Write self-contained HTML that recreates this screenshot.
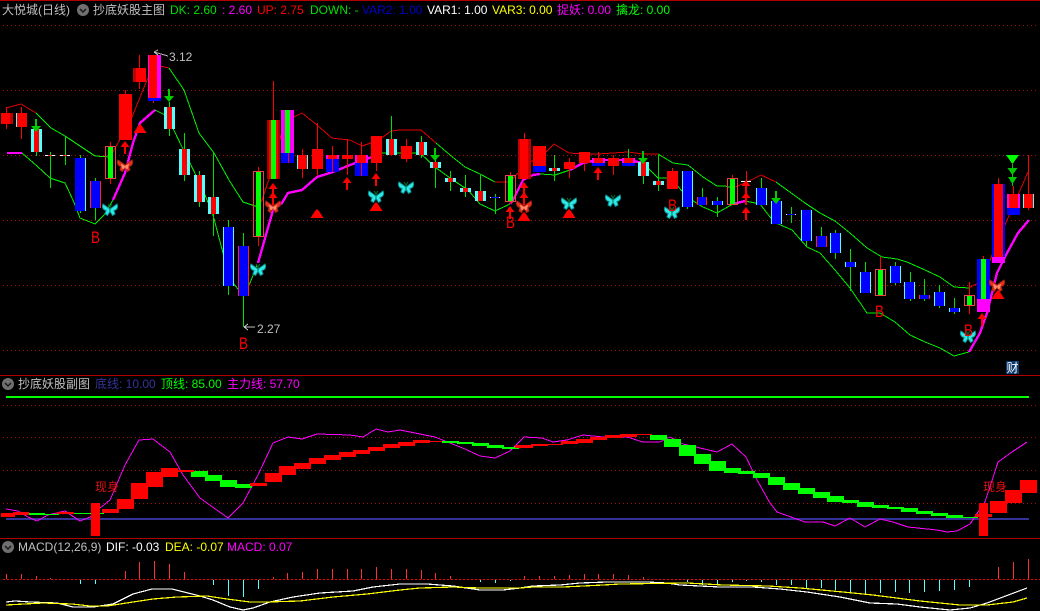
<!DOCTYPE html>
<html lang="zh"><head><meta charset="utf-8"><title>K线</title>
<style>
html,body{margin:0;padding:0;background:#000;width:1040px;height:611px;overflow:hidden}
svg{display:block}
text{font-family:"Liberation Sans","WenQuanYi Zen Hei","Noto Sans CJK SC",sans-serif;font-size:12px}
.l{fill:none;shape-rendering:crispEdges}
.p{shape-rendering:crispEdges}
</style></head><body>
<svg xmlns="http://www.w3.org/2000/svg" width="1040" height="611" viewBox="0 0 1040 611">
<defs>
<g id="bf"><path d="M0 -1 L-7 -6 C-8.500 -3 -7 0 -4 0.500 L-5 4 L-2.500 5.500 L0 1.500 L2.500 5.500 L5 4 L4 0.500 C7 0 8.500 -3 7 -6Z" stroke-width="1"/><path d="M0 1V-3M0 -3L-2 -6M0 -3L2 -6" stroke="#073" fill="none"/></g>
<g id="bo"><path d="M0 -1 L-7 -6 C-8.500 -3 -7 0 -4 0.500 L-5 4 L-2.500 5.500 L0 1.500 L2.500 5.500 L5 4 L4 0.500 C7 0 8.500 -3 7 -6Z" fill="#e83020" stroke="#a82010"/><path d="M-4 -2.500L0 0L4 -2.500L3 2.500L1 3L0 1L-1 3L-3 2.500Z" fill="#ff8a6a"/></g>
<path id="ua" d="M-4.500 6L0 0L4.500 6H1V13H-1V6Z" fill="#f00"/>
<path id="da" d="M-1 0H1V7H5L0 13L-5 7H-1Z" fill="#00cc00"/>
<path id="tr" d="M-6.500 9L-2 2L0 0L2 2L6.500 9Z" fill="#f00"/>
<g id="ci"><circle r="6" fill="#707070"/><path d="M-3 -1L0 2L3 -1" fill="none" stroke="#222" stroke-width="1.600"/></g>
</defs>
<rect width="1040" height="611" fill="#000"/>
<!-- frame -->
<path class="p" d="M0 0H1040V1H0ZM0 375H1040V376H0ZM0 538H1040V539H0Z" fill="#b00000"/>
<!-- grid -->
<path class="l" stroke="#a01010" stroke-dasharray="1 3" d="M3 25.500H1036M3 90.500H1036M3 155.500H1036M3 220.500H1036M3 285.500H1036M3 350.500H1036M3 405.500H1036M3 437.500H1036M3 470.500H1036M3 503.500H1036"/>
<!-- wicks behind bodies come after bands -->
<polyline class="l" stroke="#e00000" points="6,108 21,104 36,113"/>
<polyline class="l" stroke="#00f000" points="36,113 51,128 65,136 80,146 95,156 110,157"/>
<polyline class="l" stroke="#e00000" points="110,157 130,122 147,80 155,67 160,66 169,68"/>
<polyline class="l" stroke="#00f000" points="169,68 184,90 199,133 214,153 229,180 243,202 258,207"/>
<polyline class="l" stroke="#e00000" points="258,207 262,200 273,167 283,127 288,120 302,113 317,125 332,138 340,139 350,140 362,146 371,143 383,137 391,131 399,130 421,130 436,143"/>
<polyline class="l" stroke="#00f000" points="436,143 450,155 465,167 480,174 495,182"/>
<polyline class="l" stroke="#e00000" points="495,182 510,182 525,165 543,155 554,144 569,153 583,154 598,154 613,153 628,152 643,154 658,154"/>
<polyline class="l" stroke="#00f000" points="658,154 673,163 688,165 703,177 717,186 725,186 733,188"/>
<polyline class="l" stroke="#e00000" points="733,188 747,182 761,175 776,182"/>
<polyline class="l" stroke="#00f000" points="776,182 787,190 805,203 820,213 835,221 850,233 867,248 882,257 897,259 907,262 925,270 940,277 954,287 969,288"/>
<polyline class="l" stroke="#e00000" points="969,288 983,280 992,255 1005,225 1018,195 1028,172"/>
<polyline class="l" stroke="#00f000" points="22,153 37,166 50,178 65,183 73,200 80,218 95,224 104,215 113,200"/>
<polyline class="l" stroke="#00f000" points="155,110 167,116 182,147 190,163 203,190 213,215 223,253 233,283 243,295 250,283 257,265"/>
<polyline class="l" stroke="#00f000" points="372,157 382,153 400,153 420,153 435,167 450,178 468,190 480,204 495,211 510,204"/>
<polyline class="l" stroke="#00f000" points="540,174 555,175 570,170"/>
<polyline class="l" stroke="#00f000" points="643,163 658,178 670,178 683,192 690,199 703,207 717,213 733,204"/>
<polyline class="l" stroke="#00f000" points="745,201 760,204 770,217 776,223 792,230 807,247 820,253 835,270 850,288 867,313 880,313 895,322 910,335 925,342 940,348 954,356 969,352"/>
<g fill="none" stroke="#ff00ff" stroke-width="2.400" class="p">
<polyline class="l" points="7,153 22,153"/>
<polyline class="l" points="113,200 125,173 133,143 140,123 155,110"/>
<polyline class="l" points="258,263 273,210 282,203 288,193 302,190 317,177 333,172 350,165 372,157"/>
<polyline class="l" points="510,204 513,200 523,180 533,175 540,174"/>
<polyline class="l" points="570,170 583,163 598,160 613,160 628,160 643,163"/>
<polyline class="l" points="733,204 745,201"/>
<polyline class="l" points="969,352 980,333 987,313 997,273 1007,253 1018,233 1029,220"/>
</g>
<!-- wicks -->
<path class="l" stroke="#f00" d="M6.500 107V129M21.500 107V139M110.500 142V184M125.500 90V140M139.500 55V89M153.500 55V103M258.500 167V246M273.500 81V179M302.500 149V178M317.500 123V176M332.500 146V172M347.500 139V175M361.500 142V176M376.500 136V171M406.500 139V162M510.500 172V204M524.500 133V179M569.500 158V178M584.500 163V171M598.500 152V166M613.500 155V175M672.500 168V189M732.500 175V205M746.500 171V198M880.500 257V296M969.500 282V314M983.500 256V262M998.500 178V184M1013.500 186V215M1028.500 155V210"/>
<path class="l" stroke="#00e000" d="M36.500 119V156M50.500 152V188M65.500 136V165M80.500 155V213M95.500 178V220M169.500 102V136M184.500 133V181M199.500 171V207M213.500 153V236M228.500 220V295M243.500 233V327M391.500 116V155M421.500 136V158M435.500 148V188M450.500 171V191M465.500 175V197M480.500 175V201M495.500 194V214M554.500 155V181M628.500 149V166M643.500 151V184M658.500 155V191M687.500 207V209M702.500 188V205M717.500 197V217M761.500 178V188M791.500 207V223M806.500 241V246M821.500 227V236M835.500 230V259M850.500 249V291M865.500 262V272M895.500 262V285M910.500 272V301M924.500 279V301M939.500 285V308M954.500 298V314"/>
<!-- cyan bodies -->
<path class="p" fill="#55ffff" d="M16 113H27V127H16ZM31 129H42V152H31ZM164 107H175V129H164ZM179 149H190V175H179ZM194 175H205V202H194ZM208 197H219V214H208ZM75 158H86V211H75ZM223 227H234V286H223ZM386 139H397V155H386ZM416 142H427V155H416ZM430 162H441V168H430ZM445 178H456V182H445ZM460 188H471V192H460ZM475 191H486V201H475ZM549 168H560V171H549ZM638 162H649V176H638ZM653 181H664V185H653ZM682 171H693V207H682ZM712 201H723V205H712ZM756 188H767V205H756ZM771 201H782V224H771ZM801 210H812V241H801ZM830 233H841V253H830ZM845 262H856V267H845ZM860 272H871V293H860ZM890 266H901V283H890ZM904 282H915V299H904ZM934 292H945V306H934ZM949 308H960V312H949ZM1023 194H1034V208H1023ZM297 155H308V169H297Z"/>
<!-- white dojis -->
<path class="p" fill="#fff" d="M45 155H55V156H45ZM60 155H70V156H60ZM490 197H500V198H490ZM741 181H751V182H741ZM786 214H796V215H786Z"/>
<!-- red-edge behind blue -->
<path class="p" fill="#ff2020" d="M90 181H101V208H90ZM238 246H249V296H238ZM697 197H707V205H697ZM816 236H827V247H816ZM919 295H930V299H919ZM48 155H52V156H48ZM63 155H67V156H63Z"/>
<!-- magenta -->
<path class="p" fill="#ff00ff" d="M148 55H161V98H148ZM281 110H294V153H281ZM326 155H339V159H326ZM355 155H368V163H355ZM592 158H605V163H592ZM622 158H635V163H622ZM977 299H990V312H977ZM992 257H1005V263H992ZM1007 194H1020V208H1007Z"/>
<!-- blue -->
<path class="p" fill="#0000ff" d="M75 158H85V211H75ZM91 181H100V208H91ZM224 227H233V286H224ZM239 246H248V296H239ZM148 98H161V101H148ZM281 153H294V163H281ZM326 159H339V172H326ZM355 163H368V176H355ZM533 166H546V172H533ZM592 163H605V166H592ZM622 163H635V166H622ZM683 171H692V207H683ZM698 197H706V205H698ZM713 201H722V205H713ZM757 188H766V205H757ZM772 201H781V224H772ZM802 210H811V241H802ZM817 236H826V247H817ZM831 233H840V253H831ZM846 262H855V267H846ZM861 272H870V293H861ZM891 266H900V283H891ZM905 282H914V299H905ZM920 295H929V299H920ZM935 292H944V306H935ZM950 308H959V312H950ZM977 259H990V299H977ZM992 184H1005V257H992ZM1007 208H1020V215H1007ZM491 197H499V198H491ZM787 214H795V215H787Z"/>
<!-- red bodies -->
<path class="p" fill="#f00" d="M1 113H13V124H1ZM17 113H27V127H17ZM34 129H39V152H34ZM119 94H132V140H119ZM133 68H146V82H133ZM149 55H157V98H149ZM167 107H172V129H167ZM182 149H187V175H182ZM197 175H202V202H197ZM211 197H216V214H211ZM267 120H280V179H267ZM298 155H307V169H298ZM312 149H323V169H312ZM328 155H337V159H328ZM342 155H353V159H342ZM357 155H366V163H357ZM371 136H382V163H371ZM389 139H394V155H389ZM401 146H412V159H401ZM419 142H424V155H419ZM433 162H438V168H433ZM448 178H453V182H448ZM463 188H468V192H463ZM478 191H483V201H478ZM518 139H531V179H518ZM533 146H546V166H533ZM552 168H557V171H552ZM564 162H575V169H564ZM579 152H590V163H579ZM594 158H603V163H594ZM608 158H619V166H608ZM624 158H633V163H624ZM641 162H646V176H641ZM656 181H661V185H656ZM667 171H678V189H667ZM994 184H1003V257H994ZM1009 194H1018V208H1009ZM1024 194H1033V208H1024Z"/>
<path class="p" fill="#c00000" d="M10 113H13V124H10ZM133 68H136V82H133ZM528 139H531V179H528ZM518 139H520V179H518Z"/>
<path class="p" fill="#a00000" d="M267 120H269V179H267ZM278 120H280V179H278Z"/>
<path class="l" stroke="#f00" d="M288.500 153V163M332.500 159V172M361.500 163V176"/>
<!-- outlined -->
<path class="l" stroke="#f04040" d="M105.500 146.500H115.500V178.500H105.500ZM253.500 171.500H263.500V236.500H253.500ZM505.500 175.500H515.500V201.500H505.500ZM727.500 178.500H737.500V204.500H727.500ZM875.500 269.500H885.500V295.500H875.500ZM964.500 295.500H974.500V305.500H964.500Z"/>
<path class="p" fill="#00ff00" d="M108 147H113V178H108ZM256 172H261V236H256ZM508 176H513V201H508ZM730 179H735V204H730ZM878 270H883V295H878ZM967 296H972V305H967ZM271 120H276V179H271ZM285 110H290V153H285ZM981 259H986V299H981Z"/>
<!-- triangles -->
<use href="#tr" x="140" y="124"/><use href="#tr" x="317" y="209"/><use href="#tr" x="376" y="202"/><use href="#tr" x="524" y="212"/><use href="#tr" x="569" y="209"/><use href="#tr" x="998" y="290"/>
<!-- up arrows -->
<use href="#ua" x="125" y="141"/><use href="#ua" x="273" y="183"/><use href="#ua" x="273" y="192"/><use href="#ua" x="347" y="177"/><use href="#ua" x="376" y="173"/><use href="#ua" x="510" y="206"/><use href="#ua" x="524" y="182"/><use href="#ua" x="524" y="192"/><use href="#ua" x="598" y="167"/><use href="#ua" x="746" y="180"/><use href="#ua" x="746" y="192"/><use href="#ua" x="746" y="207"/><use href="#ua" x="982" y="313"/>
<!-- down arrows -->
<use href="#da" x="36" y="119"/><use href="#da" x="169" y="89"/><use href="#da" x="435" y="148"/><use href="#da" x="643" y="151"/><use href="#da" x="776" y="191"/>
<path class="p" fill="#00ff00" d="M1006 155H1019L1012.500 164Z"/>
<path class="p" fill="#00c800" d="M1012 164H1013V186H1012ZM1007.500 168H1017.500L1012.500 175ZM1008 177H1017L1012.500 184Z"/>
<!-- butterflies -->
<g fill="#2fe8e8" stroke="#0c8f8f">
<use href="#bf" x="110" y="210"/><use href="#bf" x="258" y="270"/><use href="#bf" x="376" y="197"/><use href="#bf" x="406" y="188"/><use href="#bf" x="569" y="204"/><use href="#bf" x="613" y="201"/><use href="#bf" x="672" y="213"/><use href="#bf" x="968" y="337"/>
</g>
<use href="#bo" x="125" y="166"/><use href="#bo" x="273" y="207"/><use href="#bo" x="524" y="207"/><use href="#bo" x="997" y="286"/>
<!-- B labels -->
<g fill="#ff0000">
<text x="91" y="243" textLength="9" lengthAdjust="spacingAndGlyphs" style="font-size:17px">B</text>
<text x="239" y="349" textLength="9" lengthAdjust="spacingAndGlyphs" style="font-size:17px">B</text>
<text x="506" y="228" textLength="9" lengthAdjust="spacingAndGlyphs" style="font-size:17px">B</text>
<text x="668" y="211" textLength="9" lengthAdjust="spacingAndGlyphs" style="font-size:17px">B</text>
<text x="875" y="317" textLength="9" lengthAdjust="spacingAndGlyphs" style="font-size:17px">B</text>
<text x="964" y="336" textLength="9" lengthAdjust="spacingAndGlyphs" style="font-size:17px">B</text>
</g>
<!-- hi/lo -->
<path class="l" stroke="#c0c0c0" d="M154 52L168 56M154 52L158 50M154 52L158 55M244 327H255M244 327L248 324M244 327L248 330"/>
<text x="169" y="61" fill="#c0c0c0">3.12</text>
<text x="257" y="333" fill="#c0c0c0">2.27</text>
<!-- header -->
<text x="2" y="14" fill="#c0c0c0">大悦城(日线)</text>
<use href="#ci" x="83" y="10"/>
<text x="93" y="14" fill="#c0c0c0">抄底妖股主图</text>
<text x="170" y="14" fill="#00e000">DK: 2.60</text>
<text x="222" y="14" fill="#ff00ff">: 2.60</text>
<text x="257" y="14" fill="#ff0000">UP: 2.75</text>
<text x="310" y="14" fill="#00e000">DOWN: -</text>
<text x="362" y="14" fill="#0000cc">VAR2: 1.00</text>
<text x="427" y="14" fill="#ffffff">VAR1: 1.00</text>
<text x="492" y="14" fill="#ffff00">VAR3: 0.00</text>
<text x="557" y="14" fill="#ff00ff">捉妖: 0.00</text>
<text x="616" y="14" fill="#00ff00">擒龙: 0.00</text>
<!-- cai -->
<rect class="p" x="1006" y="361" width="13" height="13" fill="#0a3a6e"/>
<text x="1006.500" y="372" fill="#fff">财</text>
<!-- sub panel -->
<use href="#ci" x="8" y="384"/>
<text x="18" y="388" fill="#c0c0c0">抄底妖股副图</text>
<text x="95" y="388" fill="#333399">底线: 10.00</text>
<text x="161" y="388" fill="#00ff00">顶线: 85.00</text>
<text x="227" y="388" fill="#ff00ff">主力线: 57.70</text>
<path class="p" fill="#00ff00" d="M6 396H1029V398H6Z"/>
<path class="p" fill="#333399" d="M6 518H1029V520H6Z"/>
<polyline class="l" stroke="#ff00ff" points="6,509 18,511 28,517 37,521 48,515 65,511 80,521 90,517 100,508 110,500 125,465 139,440 153,439 170,452 183,475 200,498 228,518 243,503 258,475 273,443 288,437 302,439 317,434 350,435 363,437 376,429 388,432 400,430 410,432 435,437 450,443 465,449 480,456 495,458 510,451 524,437 542,438 553,442 567,440 583,435 603,437 627,437 643,442 660,442 670,437 683,444 700,448 717,452 732,444 746,457 757,480 770,503 777,512 805,522 823,522 835,526 850,518 865,527 880,519 893,522 908,527 937,530 947,532 957,531 970,524 978,512 985,502 998,462 1012,452 1027,442"/>
<path class="p" fill="#00ff00" d="M28 513H45V515H28ZM45 514H59V515H45ZM72 513H92V514H72ZM100 513H104V514H100ZM191 471H208V477H191ZM205 475H222V481H205ZM220 480H237V487H220ZM235 484H252V488H235ZM442 441H459V443H442ZM457 442H474V444H457ZM472 443H489V446H472ZM487 445H504V448H487ZM502 447H519V449H502ZM650 435H667V440H650ZM664 439H681V447H664ZM679 445H696V456H679ZM694 454H711V464H694ZM709 461H726V471H709ZM724 468H741V473H724ZM738 471H755V474H738ZM753 473H770V478H753ZM768 477H785V485H768ZM783 483H800V490H783ZM798 488H815V494H798ZM813 492H830V498H813ZM827 496H844V502H827ZM842 500H859V503H842ZM857 502H874V507H857ZM872 505H889V508H872ZM887 507H904V509H887ZM901 508H918V512H901ZM916 511H933V514H916ZM931 513H948V516H931ZM946 515H963V518H946ZM963 517H978V518H963Z"/>
<path class="p" fill="#f00" d="M1 513H15V517H1ZM13 512H29V515H13ZM57 512H74V514H57ZM91 503H100V536H91ZM102 509H119V513H102ZM117 499H134V509H117ZM131 483H148V499H131ZM146 472H163V487H146ZM161 468H178V477H161ZM178 470H194V472H178ZM250 483H267V486H250ZM265 473H282V482H265ZM279 466H296V475H279ZM294 463H311V469H294ZM309 458H326V464H309ZM324 455H341V460H324ZM339 452H356V457H339ZM353 450H370V454H353ZM368 447H385V451H368ZM383 444H400V448H383ZM398 442H415V446H398ZM413 440H430V443H413ZM430 441H442V442H430ZM515 445H533V448H515ZM531 444H548V446H531ZM548 444H563V445H548ZM561 441H578V444H561ZM576 439H593V443H576ZM590 437H607V440H590ZM605 435H622V438H605ZM620 434H637V437H620ZM637 434H652V435H637ZM975 514H992V517H975ZM979 503H988V536H979ZM990 501H1007V513H990ZM1005 490H1022V503H1005ZM1020 480H1037V493H1020Z"/>
<text x="95" y="491" fill="#e01010">现身</text>
<text x="983" y="491" fill="#e01010">现身</text>
<!-- MACD -->
<use href="#ci" x="8" y="547"/>
<text x="18" y="551" fill="#c0c0c0">MACD(12,26,9)</text>
<text x="106" y="551" fill="#ffffff">DIF: -0.03</text>
<text x="165" y="551" fill="#ffff00">DEA: -0.07</text>
<text x="227" y="551" fill="#ff00ff">MACD: 0.07</text>
<path class="l" stroke="#ff0000" stroke-dasharray="2 2" d="M3 579.500H1040"/>
<path class="l" stroke="#ff3030" d="M6.500 574V579M21.500 574V579M36.500 576V579M50.500 578V579M125.500 571V579M139.500 562V579M154.500 561V579M169.500 564V579M184.500 572V579M273.500 577V579M287.500 573V579M302.500 572V579M317.500 569V579M332.500 569V579M347.500 569V579M361.500 569V579M376.500 567V579M391.500 569V579M406.500 569V579M421.500 570V579M435.500 573V579M450.500 576V579M524.500 576V579M539.500 576V579M554.500 576V579M569.500 575V579M584.500 574V579M598.500 574V579M613.500 574V579M628.500 575V579M643.500 577V579M998.500 567V579M1013.500 562V579M1028.500 559V579"/>
<path class="l" stroke="#55ffff" d="M80.500 580V584M95.500 580V584M213.500 580V585M228.500 580V596M243.500 580V597M258.500 580V589M480.500 580V582M495.500 580V583M510.500 580V581M687.500 580V582M702.500 580V585M717.500 580V584M732.500 580V582M746.500 580V581M761.500 580V582M776.500 580V585M791.500 580V585M806.500 580V588M821.500 580V588M835.500 580V590M850.500 580V592M865.500 580V594M880.500 580V593M895.500 580V592M909.500 580V593M924.500 580V592M939.500 580V591M954.500 580V590M969.500 580V587"/>
<polyline class="l" stroke="#ffffff" stroke-width="1.200" points="6,602 15,601 30,602 57,603 73,607 93,607 113,604 133,594 152,589 172,589 200,596 213,600 230,607 243,610 253,608 270,602 293,597 320,593 353,591 373,587 400,584 427,584 453,586 480,590 503,590 520,588 533,586 560,585 580,583 607,582 647,582 667,583 680,585 720,587 753,587 780,589 807,592 840,597 870,603 897,604 920,607 950,610 970,608 987,603 1003,597 1027,588"/>
<polyline class="l" stroke="#ffff00" stroke-width="1.200" points="6,605 43,603 72,604 90,606 107,606 133,602 153,599 177,597 207,596 227,599 250,602 267,602 300,601 333,597 367,594 400,590 420,588 453,587 480,588 520,588 533,587 563,587 603,585 620,584 687,583 723,585 768,586 800,588 843,592 873,595 920,601 960,605 987,605 1013,602 1027,598"/>
</svg>
</body></html>
